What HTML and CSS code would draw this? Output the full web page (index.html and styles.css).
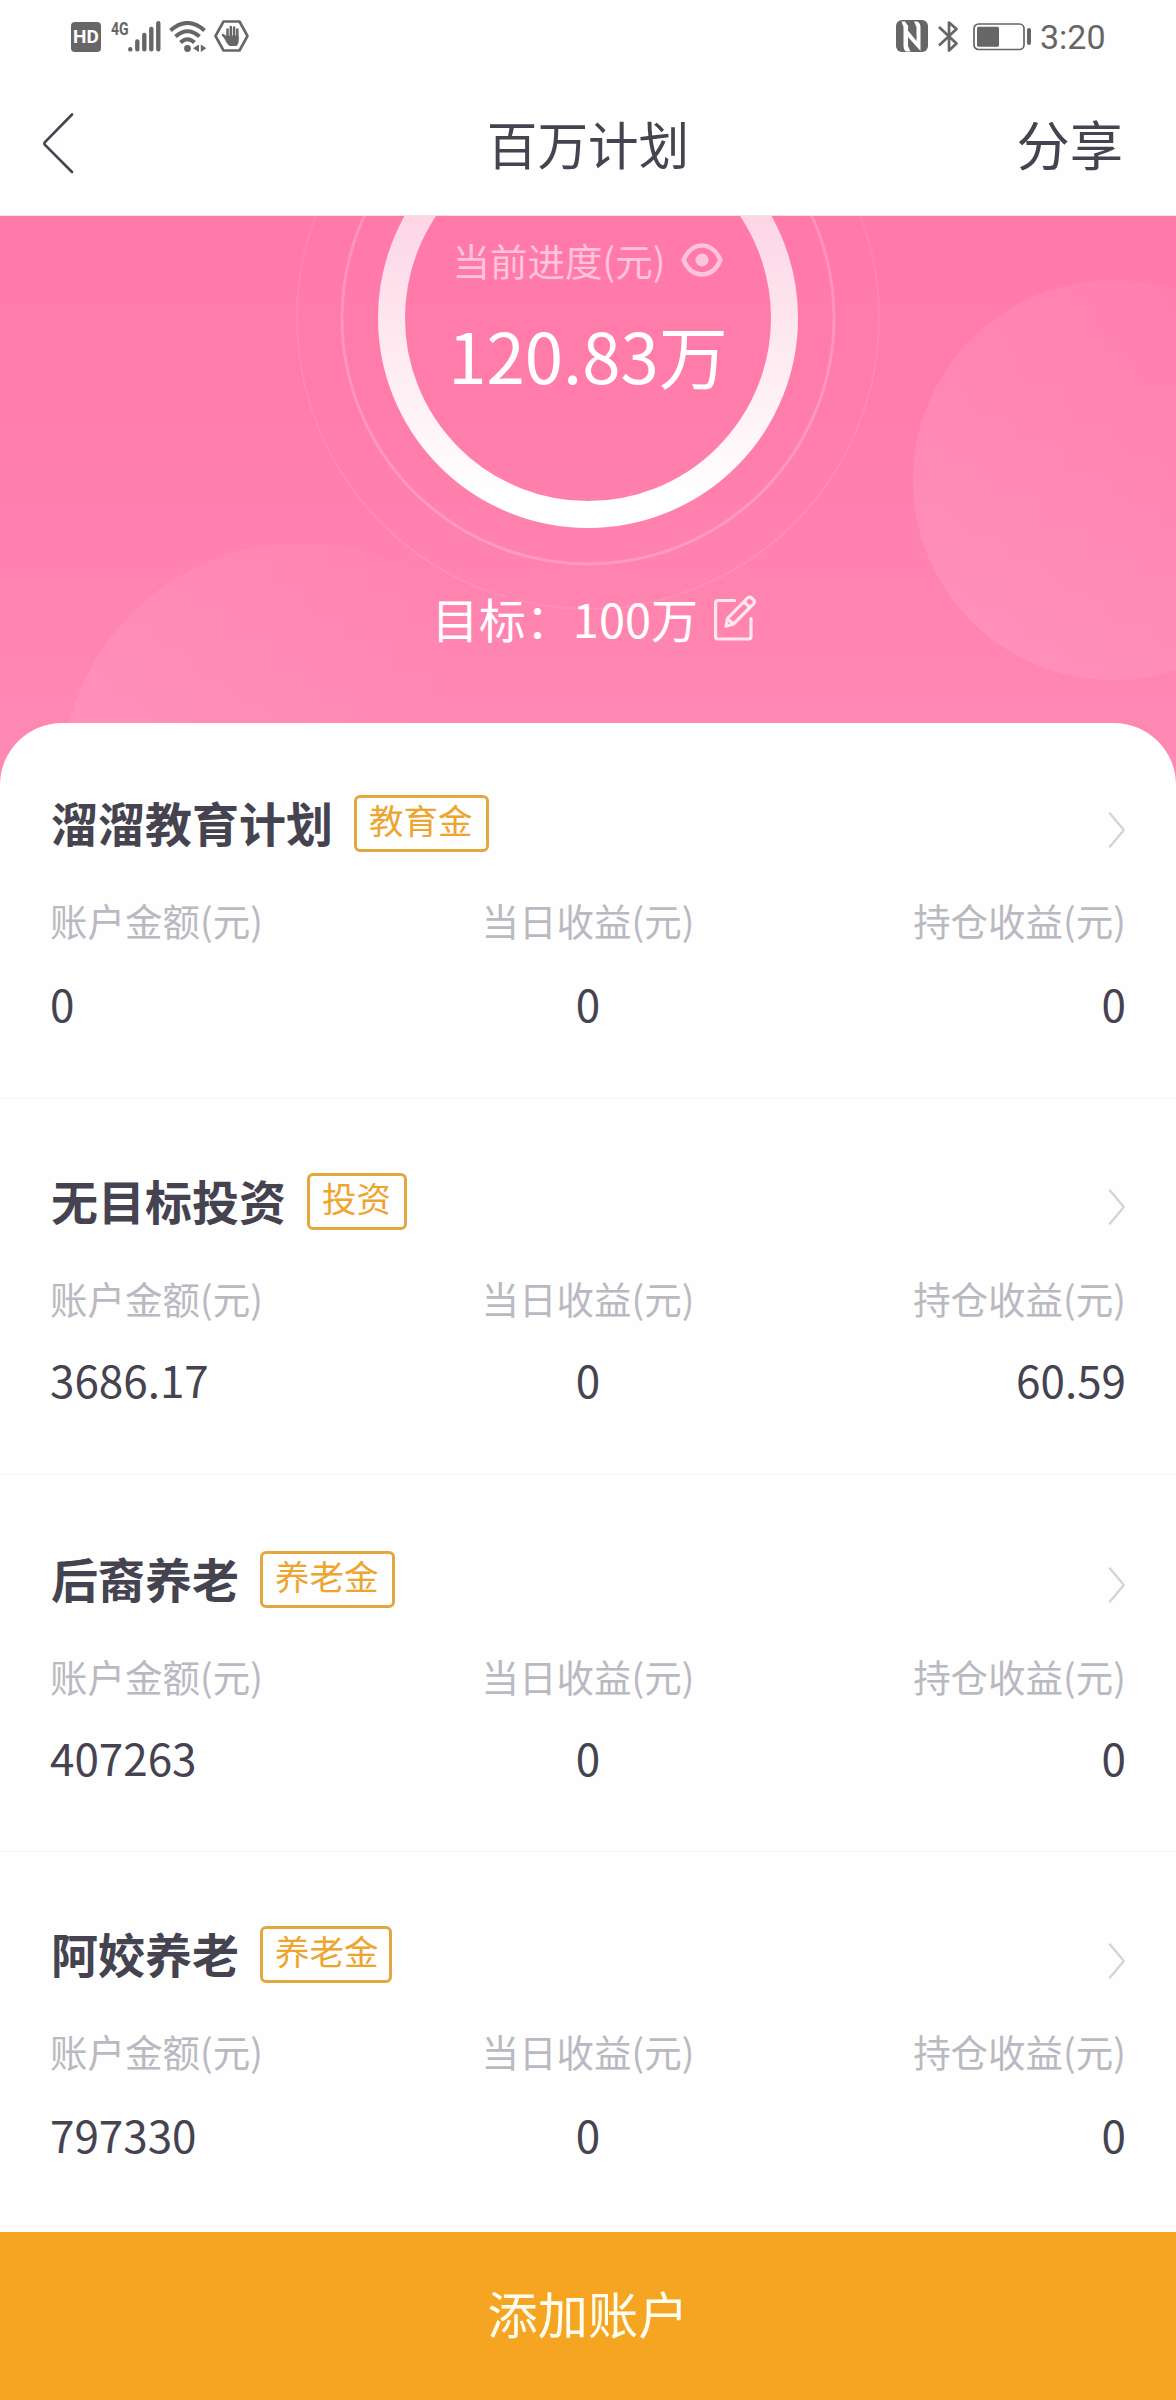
FILE: index.html
```html
<!DOCTYPE html>
<html lang="zh-CN">
<head>
<meta charset="utf-8">
<title>百万计划</title>
<link rel="stylesheet" href="styles.css">
</head>
<body>
<div class="app">
  <div class="status">
    <div class="status-left">
      <span class="hd">HD</span>
      <span class="net">4G</span>
      <svg class="signal" width="33" height="31" viewBox="0 0 33 31" fill="none" stroke="currentColor" stroke-width="4.400" stroke-linecap="round"><path d="M2.300 28.300v.1M9.300 20.500v7.800M16.300 14v14.300M23.300 8v20.300M30.300 2.300v26"/></svg>
      <svg class="wifi" width="38" height="32" viewBox="0 0 38 32" fill="none" stroke="currentColor" stroke-width="4"><path d="M1.500 9.500Q18.500-5.500 35.500 9.500M6.500 15.500Q18.500 5 30.500 15.500M11.500 21.500Q18.500 15 25.500 21.500"/><circle cx="18.500" cy="27.500" r="3.400" fill="currentColor" stroke="none"/><path d="M30 23.500v7.500l-6-3.700zM31.800 23.500v7.500l5.500-3.700z" fill="currentColor" stroke="none"/></svg>
      <svg class="hand" width="35" height="32" viewBox="0 0 35 32"><path d="M9.500 1.500h16L33.500 16l-8 14.500h-16L1.500 16z" fill="none" stroke="currentColor" stroke-width="2.600" stroke-linejoin="round"/><path d="M9 15l4.500 4.500M13.500 9.500v9M16.800 7v11M20.100 7.500v11M23.300 9.500v10" fill="none" stroke="currentColor" stroke-width="2.500" stroke-linecap="round"/><path d="M12.200 15.500h12.400v6q0 2.500-2 4.500h-6.600q-2-1-3.500-3.500L9 16z" fill="currentColor"/></svg>
    </div>
    <div class="status-right">
      <svg class="nfc" width="32" height="32" viewBox="0 0 32 32"><rect width="32" height="32" rx="6" fill="currentColor"/><path d="M5.500 1.500h3.500L20.500 18V7l-2.500-5.500h3.500q3 1.500 3 6V31L12 17v9l2.500 5.500H10q-2.500-1.500-2.500-6V7z" fill="#fefefe"/><path d="M12 10.500l8.500 10.500v-4.500L12 6z" fill="currentColor"/></svg>
      <svg class="bt" width="21" height="33" viewBox="0 0 21 33" fill="none" stroke="currentColor" stroke-width="2.700" stroke-linejoin="round"><path d="M1 7l17.500 16.500L11 30.500V2.500l7.500 6.500L1 25.500"/></svg>
      <svg class="battery" width="58" height="28" viewBox="0 0 58 28"><rect x="1" y="1" width="50" height="25.500" rx="4.500" fill="none" stroke="currentColor" stroke-width="1.700"/><rect x="4" y="3.700" width="22" height="20" rx="1.500" fill="currentColor"/><rect x="54" y="5" width="4" height="17" rx="2" fill="currentColor"/></svg>
      <span class="clock">3:20</span>
    </div>
  </div>

  <header class="nav">
    <svg class="back" width="31" height="61" viewBox="0 0 31 61"><path d="M29 1.500 2 29q-1.200 1.500 0 3l27 27" fill="none" stroke="currentColor" stroke-width="2.600" stroke-linecap="round"/></svg>
    <h1 class="nav-title">百万计划</h1>
    <span class="share">分享</span>
  </header>

  <section class="hero">
    <svg class="hero-art" width="1176" height="570" viewBox="0 216 1176 570">
      <defs>
        <linearGradient id="ring" gradientUnits="userSpaceOnUse" x1="0" y1="216" x2="0" y2="500"><stop offset="0" stop-color="#fdd6e5"/><stop offset=".5" stop-color="#feebf2"/><stop offset="1" stop-color="#fff"/></linearGradient>
        <linearGradient id="bubble-right" x1="0" y1=".6" x2="1" y2=".3"><stop offset="0" stop-color="#fff" stop-opacity=".1"/><stop offset=".75" stop-color="#fff" stop-opacity=".04"/><stop offset="1" stop-color="#fff" stop-opacity=".02"/></linearGradient>
        <linearGradient id="bubble-left" x1="0" y1=".3" x2="1" y2=".3"><stop offset="0" stop-color="#fff" stop-opacity=".08"/><stop offset=".85" stop-color="#fff" stop-opacity="0"/></linearGradient>
      </defs>
      <circle cx="1113" cy="480" r="200" fill="url(#bubble-right)"/>
      <circle cx="301" cy="782" r="239" fill="url(#bubble-left)"/>
      <circle cx="588" cy="318" r="291" fill="none" stroke="#fff" stroke-opacity=".09" stroke-width="2"/>
      <circle cx="588" cy="318" r="246" fill="none" stroke="#fff" stroke-opacity=".2" stroke-width="3"/>
      <circle cx="588" cy="318" r="196.500" fill="none" stroke="url(#ring)" stroke-width="27"/>
    </svg>
    <div class="progress-label">
      <span>当前进度(元)</span>
      <svg width="42" height="34" viewBox="0 0 42 34"><path d="M2.500 17Q9 2.500 21 2.500T39.500 17Q33 31.500 21 31.500T2.500 17z" fill="none" stroke="currentColor" stroke-width="4.400"/><circle cx="21" cy="17" r="6.500" fill="currentColor"/></svg>
    </div>
    <div class="progress-value">120.83万</div>
    <div class="goal">
      <span>目标：100万</span>
      <svg width="43" height="46" viewBox="0 0 43 46" fill="none" stroke="currentColor" stroke-width="3.200" stroke-linejoin="round" stroke-linecap="round"><path d="M20.500 5.500H4q-2.400 0-2.400 2.500V41.500q0 2.500 2.400 2.500H34.500q2.500 0 2.500-2.500V23.500"/><path d="M13.500 23.500 33.500 3q2-2 4 0l2 1.800q2 2 0 4L19.500 29l-7.500 2.300zM30 7l6 5.500M13.500 24l6 5"/></svg>
    </div>
  </section>

  <main class="accounts">
    <article class="account">
      <div class="account-head"><h2>溜溜教育计划</h2><span class="tag">教育金</span><svg class="more" width="17" height="36" viewBox="0 0 17 36"><path d="M2 1.500 15 17q.8 1 0 2L2 34.500"/></svg></div>
      <div class="row labels"><span>账户金额(元)</span><span>当日收益(元)</span><span>持仓收益(元)</span></div>
      <div class="row values"><span>0</span><span>0</span><span>0</span></div>
    </article>
    <article class="account account-invest">
      <div class="account-head"><h2>无目标投资</h2><span class="tag">投资</span><svg class="more" width="17" height="36" viewBox="0 0 17 36"><path d="M2 1.500 15 17q.8 1 0 2L2 34.500"/></svg></div>
      <div class="row labels"><span>账户金额(元)</span><span>当日收益(元)</span><span>持仓收益(元)</span></div>
      <div class="row values"><span>3686.17</span><span>0</span><span>60.59</span></div>
    </article>
    <article class="account account-heir">
      <div class="account-head"><h2>后裔养老</h2><span class="tag">养老金</span><svg class="more" width="17" height="36" viewBox="0 0 17 36"><path d="M2 1.500 15 17q.8 1 0 2L2 34.500"/></svg></div>
      <div class="row labels"><span>账户金额(元)</span><span>当日收益(元)</span><span>持仓收益(元)</span></div>
      <div class="row values"><span>407263</span><span>0</span><span>0</span></div>
    </article>
    <article class="account account-pension">
      <div class="account-head"><h2>阿姣养老</h2><span class="tag">养老金</span><svg class="more" width="17" height="36" viewBox="0 0 17 36"><path d="M2 1.500 15 17q.8 1 0 2L2 34.500"/></svg></div>
      <div class="row labels"><span>账户金额(元)</span><span>当日收益(元)</span><span>持仓收益(元)</span></div>
      <div class="row values"><span>797330</span><span>0</span><span>0</span></div>
    </article>
  </main>

  <div class="add">添加账户</div>
</div>
</body>
</html>
```

FILE: styles.css
```css
* { box-sizing: border-box; }

body {
  margin: 0;
  background: #fefefe;
  color: #454350;
  font-family: "Noto Sans CJK SC", sans-serif;
}

h1, h2 { margin: 0; }
svg { display: block; flex: none; }

.app {
  width: 1176px;
  height: 2400px;
  display: flex;
  flex-direction: column;
  overflow: hidden;
}

/* status bar */
.status {
  height: 72px;
  flex: none;
  display: flex;
  justify-content: space-between;
  padding: 20px 72px 0 71px;
  color: #666;
}
.status-left, .status-right { display: flex; align-items: flex-start; }
.hd {
  width: 30px;
  height: 30px;
  margin-top: 2px;
  border-radius: 4px;
  background: #666;
  color: #fefefe;
  font: bold 19px/30px Roboto, sans-serif;
  text-align: center;
}
.net {
  width: 18px;
  margin-left: 10px;
  font: bold 19px/17px Roboto, sans-serif;
  transform: scaleX(.74);
  transform-origin: left;
}
.signal { margin: 1px 0 0 -1px; }
.wifi { margin: 1px 0 0 8px; }
.hand { margin-left: 7px; }
.nfc { margin-right: 10px; }
.bt { margin-right: 14px; }
.battery { margin: 3px 9px 0 0; }
.clock { width: 64px; font: 34px/34px Roboto, sans-serif; white-space: nowrap; }

/* title bar */
.nav {
  height: 144px;
  flex: none;
  display: grid;
  grid-template-columns: 1fr auto 1fr;
  align-items: center;
  padding: 0 53px 2px 43px;
  border-bottom: 1px solid #f3dfe7;
}
.back { margin-top: 2px; }
.nav-title { font-weight: 400; font-size: 50.600px; line-height: 72px; padding-left: 10px; }
.share { justify-self: end; font-size: 53.300px; line-height: 72px; }

/* progress */
.hero {
  position: relative;
  height: 570px;
  flex: none;
  display: flex;
  flex-direction: column;
  align-items: center;
  padding-top: 14px;
  background: linear-gradient(#ff79a9, #ff7dab 35%, #ff8ab4);
  color: #fff;
}
.hero-art { position: absolute; top: 0; left: 0; }
.progress-label, .progress-value, .goal { position: relative; }
.progress-label {
  display: flex;
  align-items: center;
  gap: 16px;
  color: #ffc3da;
  font-size: 37.500px;
  line-height: 60px;
}
.progress-value { margin-top: 19px; font-size: 69px; line-height: 90px; }
.goal {
  display: flex;
  align-items: center;
  gap: 16px;
  margin: 184px 0 0 13px;
  font-size: 47px;
  line-height: 70px;
}
.goal svg { opacity: .8; }

/* accounts */
.accounts {
  position: relative;
  flex: 1;
  margin-top: -63px;
  border-radius: 62px 62px 0 0;
  background: #fefefe;
}
.account {
  --value-gap: 28px;
  height: 376px;
  padding: 72px 50px 0;
  border-bottom: 1px solid #f4f4f5;
}
.account-invest { --value-gap: 26px; padding-top: 74px; }
.account-heir { --value-gap: 26px; height: 377px; padding-top: 76px; }
.account-pension { height: 375px; padding-top: 74px; }
.account-head { display: flex; align-items: flex-start; height: 57px; }
.account h2 { margin-left: 1px; font-size: 47px; line-height: 54px; font-weight: 700; }
.tag {
  height: 57px;
  margin-left: 21px;
  padding: 0 13px 0 12px;
  border: 3px solid #e2a740;
  border-radius: 6px;
  color: #eda52f;
  font-size: 34.500px;
  line-height: 43px;
}
.account-pension .tag { padding-right: 10px; }
.more {
  margin: 17px 1px 0 auto;
  fill: none;
  stroke: #d3d3d9;
  stroke-width: 2.400px;
  stroke-linecap: round;
}
.account-invest .more, .account-heir .more { margin-top: 16px; }
.row { display: grid; grid-template-columns: repeat(3, 1fr); }
.row span:nth-child(2) { text-align: center; }
.row span:nth-child(3) { text-align: right; }
.labels { margin-top: 43px; color: #bab9c1; font-size: 37.500px; line-height: 50px; }
.values { margin-top: var(--value-gap); font-size: 44px; line-height: 60px; }

/* bottom action */
.add {
  position: relative;
  height: 168px;
  flex: none;
  padding-bottom: 7px;
  background: #f6a522;
  color: #fffdf0;
  font-size: 50.200px;
  line-height: 161px;
  text-align: center;
}
```
